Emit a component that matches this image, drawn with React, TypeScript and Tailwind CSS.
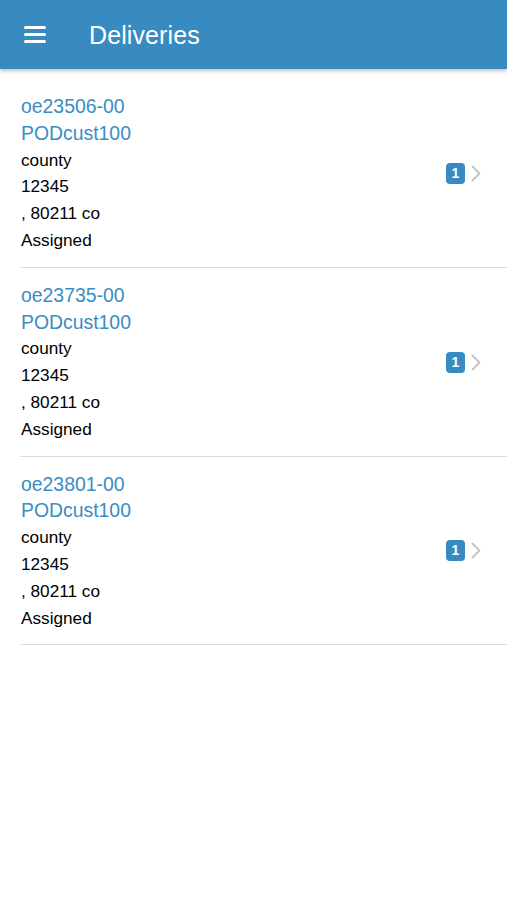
import React from "react";

const items = [
  { id: "oe23506-00" },
  { id: "oe23735-00" },
  { id: "oe23801-00" },
];

export default function App() {
  return (
    <div className="min-h-[900px] bg-white" style={{ fontFamily: '"Liberation Sans", Arial, sans-serif' }}>
      <header className="h-[69px] bg-[#378bc1] flex items-center shadow-[0_2px_4px_rgba(0,0,0,0.25)] relative z-10">
        <div className="ml-[24px] w-[22px] flex flex-col gap-[4px]">
          <div className="h-[3px] bg-white rounded-sm" />
          <div className="h-[3px] bg-white rounded-sm" />
          <div className="h-[3px] bg-white rounded-sm" />
        </div>
        <h1 className="ml-[43px] mt-[3px] text-white text-[25px] tracking-[0.1px]">Deliveries</h1>
      </header>
      <div className="pt-[10px]">
        {items.map((it) => (
          <div key={it.id} className="ml-[20px] border-b border-[#dcdcdc] flex items-center pt-[14px] pb-[13px]">
            <div className="flex-1 flex flex-col pl-[1px]">
              <div className="text-[19.4px] leading-[26.8px] text-[#3a8dc3]">{it.id}</div>
              <div className="text-[19.4px] leading-[26.8px] text-[#3a8dc3]">PODcust100</div>
              <div className="text-[17.2px] leading-[26.8px] text-black">county</div>
              <div className="text-[17.2px] leading-[26.8px] text-black">12345</div>
              <div className="text-[17.2px] leading-[26.8px] text-black">, 80211 co</div>
              <div className="text-[17.2px] leading-[26.8px] text-black">Assigned</div>
            </div>
            <div className="flex items-center mr-[26px] gap-[6px]">
              <div className="w-[19px] h-[21px] rounded-[4px] bg-[#378bc1] text-white text-[14px] font-bold flex items-center justify-center">1</div>
              <svg width="10" height="17" viewBox="0 0 10 17" fill="none">
                <path d="M1.5 1.5 L8.5 8.5 L1.5 15.5" stroke="#c4c4c4" strokeWidth="1.8" strokeLinecap="round" strokeLinejoin="round" />
              </svg>
            </div>
          </div>
        ))}
      </div>
    </div>
  );
}
